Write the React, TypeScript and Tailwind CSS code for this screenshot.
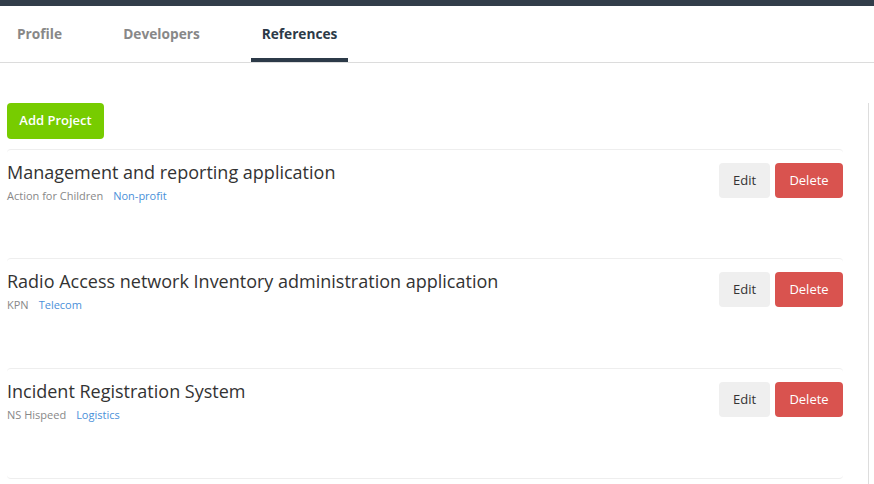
import React from "react";

const projects = [
  { title: "Management and reporting application", client: "Action for Children", sector: "Non-profit", h: "h-[109px]" },
  { title: "Radio Access network Inventory administration application", client: "KPN", sector: "Telecom", h: "h-[110px]" },
  { title: "Incident Registration System", client: "NS Hispeed", sector: "Logistics", h: "h-[110px]" },
];

export default function App() {
  return (
    <div className="w-[874px] h-[484px] overflow-hidden bg-white" style={{ fontFamily: '"Open Sans", sans-serif' }}>
      <div className="h-[6px] bg-[#323d4a]" />
      <div className="flex h-[57px] border-b border-[#dcdcdc] pl-[7px] gap-[41px]">
        <div className="w-[65px] h-[56px] flex items-center justify-center text-[13.7px] font-bold text-[#888888]">Profile</div>
        <div className="w-[97px] h-[56px] flex items-center justify-center text-[13.7px] font-bold text-[#888888]">Developers</div>
        <div className="w-[97px] h-[56px] flex items-center justify-center text-[13.7px] font-bold text-[#2c3a48] border-b-4 border-[#2c3a48] pt-[4px]">References</div>
      </div>
      <div className="ml-[7px] mt-[40px] w-[862px] pr-[25px] border-r border-[#dddddd] h-[400px]">
        <button className="h-[36px] w-[97px] rounded-[4px] bg-[#77cc00] text-white text-[13px] font-semibold">Add Project</button>
        <div className="mt-[10px] border-b border-[#eeeeee] rounded-[4px]">
          {projects.map((p) => (
            <div key={p.title} className={`${p.h} border-t border-[#eeeeee] rounded-[4px] pt-[13px] flex justify-between items-start`}>
              <div>
                <div className="text-[18px] leading-[20px] text-[#333333] mt-[-1px]">{p.title}</div>
                <div className="mt-[7px] text-[11px] leading-[14px] flex gap-[10px]">
                  <span className="text-[#888888]">{p.client}</span>
                  <span className="text-[#4a90d9]">{p.sector}</span>
                </div>
              </div>
              <div className="flex gap-[5px]">
                <button className="h-[35px] w-[51px] rounded-[4px] bg-[#efefef] text-[#333333] text-[13px] pt-[1px]">Edit</button>
                <button className="h-[35px] w-[68px] rounded-[4px] bg-[#d9534f] text-white text-[13px] pt-[1px]">Delete</button>
              </div>
            </div>
          ))}
        </div>
      </div>
    </div>
  );
}
